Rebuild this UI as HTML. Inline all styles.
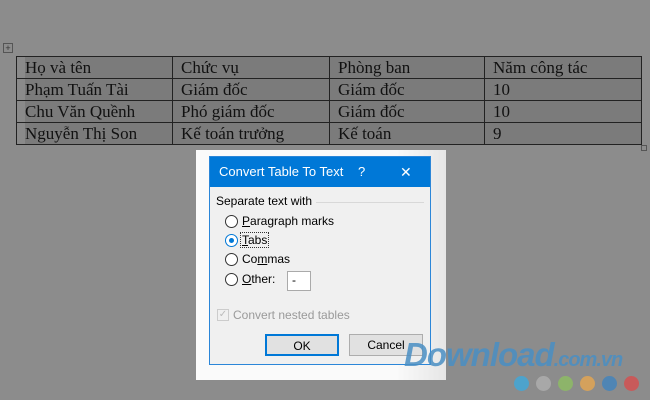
<!DOCTYPE html>
<html><head><meta charset="utf-8"><style>
*{margin:0;padding:0;box-sizing:border-box}
body{width:650px;height:400px;background:#8c8c8c;position:relative;overflow:hidden;font-family:"Liberation Sans",sans-serif}
.tbl{position:absolute;left:16px;top:56px;border-collapse:collapse;font-family:"Liberation Serif",serif;font-size:17px;color:#111}
.tbl td{border:1px solid #222;height:22px;padding:0 0 0 8px;background:#7b7b7b;line-height:20px;white-space:nowrap}
.tbl td.f{box-shadow:inset 8px 0 0 #8a8a8a}
.mv{position:absolute;left:3px;top:43px;width:10px;height:10px;border:1px solid #555;font-size:9px;line-height:8px;text-align:center;color:#333}
.wbg{position:absolute;left:196px;top:150px;width:250px;height:230px;background:linear-gradient(90deg,#fafafa 80%,#e6e6e6)}
.dlg{position:absolute;left:209px;top:156px;width:222px;height:209px;background:#f0f0f0;border:1px solid #2b86d8}
.tb{height:30px;background:#0078d7;color:#fff;font-size:13px;line-height:30px;padding-left:9px;position:relative}
.t{position:absolute;font-size:12px;color:#000}
.r{position:absolute;left:15px;width:13px;height:13px;border:1px solid #333;border-radius:50%;background:#fff}
.btn{position:absolute;top:177px;height:22px;background:#e1e1e1;border:1px solid #adadad;font-size:12px;text-align:center;line-height:20px}
.dot{position:absolute;top:376px;width:15px;height:15px;border-radius:50%}
</style></head><body>
<div class="mv">+</div>
<table class="tbl">
<tr><td class="f" style="width:156px">Họ và tên</td><td style="width:157px">Chức vụ</td><td style="width:155px">Phòng ban</td><td style="width:157px">Năm công tác</td></tr>
<tr><td class="f">Phạm Tuấn Tài</td><td>Giám đốc</td><td>Giám đốc</td><td>10</td></tr>
<tr><td class="f">Chu Văn Quềnh</td><td>Phó giám đốc</td><td>Giám đốc</td><td>10</td></tr>
<tr><td class="f">Nguyễn Thị Son</td><td>Kế toán trưởng</td><td>Kế toán</td><td>9</td></tr>
</table>
<div style="position:absolute;left:641px;top:145px;width:6px;height:6px;border:1px solid #555"></div>
<div class="wbg"></div>
<div class="dlg">
<div class="tb">Convert Table To Text<span style="position:absolute;left:148px">?</span><span style="position:absolute;left:190px;font-size:14px;font-weight:300">✕</span></div>
<div class="t" style="left:6px;top:37px">Separate text with</div>
<div style="position:absolute;left:106px;top:45px;width:108px;height:1px;background:#d8d8d8"></div>
<div class="r" style="top:58px"></div><div class="t" style="left:32px;top:57px"><u>P</u>aragraph marks</div>
<div class="r" style="top:77px;border-color:#0078d7"><div style="position:absolute;left:3px;top:3px;width:5px;height:5px;border-radius:50%;background:#0078d7"></div></div><div class="t" style="left:31px;top:76px;outline:1px dotted #333;padding:0 1px"><u>T</u>abs</div>
<div class="r" style="top:96px"></div><div class="t" style="left:32px;top:95px">Co<u>m</u>mas</div>
<div class="r" style="top:116px"></div><div class="t" style="left:32px;top:115px"><u>O</u>ther:</div>
<div style="position:absolute;left:77px;top:114px;width:24px;height:20px;background:#fff;border:1px solid #aaa;font-size:12px;padding-left:4px;line-height:17px">-</div>
<div style="position:absolute;left:7px;top:152px;width:12px;height:12px;border:1px solid #ccc;color:#bbb;font-size:10px;line-height:10px;text-align:center">✓</div>
<div class="t" style="left:23px;top:151px;color:#9a9a9a">Convert nested tables</div>
<div class="btn" style="left:55px;width:74px;border:2px solid #0078d7">OK</div>
<div class="btn" style="left:139px;width:74px">Cancel</div>
</div>
<div style="position:absolute;left:404px;top:336px;font:italic bold 33px 'Liberation Sans',sans-serif;color:#4a8fc4;letter-spacing:-1px;opacity:.85">Download<span style="font-size:20px">.com.vn</span></div>
<div class="dot" style="left:514px;background:#4da3cc"></div>
<div class="dot" style="left:536px;background:#a8a8a8"></div>
<div class="dot" style="left:558px;background:#8db46a"></div>
<div class="dot" style="left:580px;background:#d4a15c"></div>
<div class="dot" style="left:602px;background:#4f85b4"></div>
<div class="dot" style="left:624px;background:#c85a5a"></div>
</body></html>
